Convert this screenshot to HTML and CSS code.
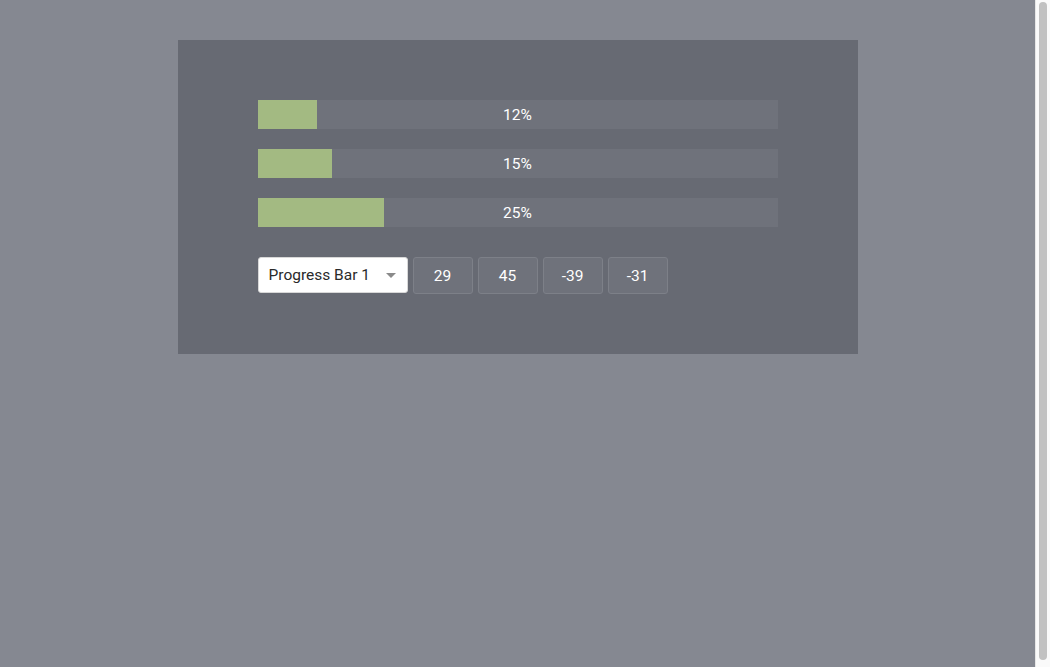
FILE: index.html
```html
<!DOCTYPE html>
<html lang="en">
<head>
<meta charset="utf-8">
<title>Progress Bars</title>
<link rel="stylesheet" href="styles.css">
</head>
<body>
<main class="panel">
  <div class="bars">
    <div class="bar"><div class="fill" style="width:11.35%"></div><span class="label">12%</span></div>
    <div class="bar"><div class="fill" style="width:14.4%"></div><span class="label">15%</span></div>
    <div class="bar"><div class="fill" style="width:24.4%"></div><span class="label">25%</span></div>
  </div>
  <div class="controls">
    <div class="select">
      <span>Progress Bar 1</span>
      <span class="caret"></span>
    </div>
    <button class="btn">29</button>
    <button class="btn">45</button>
    <button class="btn">-39</button>
    <button class="btn">-31</button>
  </div>
</main>
<div class="scrollbar" aria-hidden="true"><div class="thumb"></div></div>
</body>
</html>
```

FILE: styles.css
```css
html {
  background: #858891;
}
body {
  margin: 0;
  padding: 40px 15px 0 0;
  min-height: 100vh;
  box-sizing: border-box;
  font-family: Roboto, "Liberation Sans", sans-serif;
  color: #ffffff;
}
.scrollbar {
  position: fixed;
  top: 0;
  right: 0;
  bottom: 0;
  width: 15px;
  box-sizing: border-box;
  background: #fafafa;
  border-left: 1px solid #e6e6e6;
  padding: 2px 3px 7px 3px;
  display: flex;
}
.thumb {
  flex: 1;
  background: #c1c1c1;
  border-radius: 4px;
}
.panel {
  width: 680px;
  margin: 0 auto;
  box-sizing: border-box;
  padding: 60px 80px 60px;
  background: #676a73;
  height: 313.5px;
}
.bars {
  display: flex;
  flex-direction: column;
  gap: 20px;
}
.bar {
  position: relative;
  height: 29px;
  background: #6f727b;
  display: flex;
  align-items: center;
  justify-content: center;
}
.fill {
  position: absolute;
  left: 0;
  top: 0;
  bottom: 0;
  background: #a3ba82;
}
.label {
  position: relative;
  font-size: 15.5px;
  color: #ffffff;
}
.controls {
  display: flex;
  gap: 5px;
  margin-top: 30px;
}
.select {
  width: 150px;
  height: 36px;
  box-sizing: border-box;
  background: #ffffff;
  border: 1px solid #d8d8d8;
  border-radius: 3px;
  display: flex;
  align-items: center;
  justify-content: space-between;
  padding: 0 11px 0 10px;
  font-size: 15.5px;
  color: #2a2a2a;
}
.caret {
  width: 0;
  height: 0;
  border-left: 5px solid transparent;
  border-right: 5px solid transparent;
  border-top: 5px solid #8a8a8a;
}
.btn {
  width: 60px;
  height: 37px;
  box-sizing: border-box;
  background: #6f727b;
  border: 1px solid #7d8088;
  border-radius: 3px;
  color: #ffffff;
  font-family: Roboto, "Liberation Sans", sans-serif;
  font-size: 15.5px;
  padding: 0;
}
```
